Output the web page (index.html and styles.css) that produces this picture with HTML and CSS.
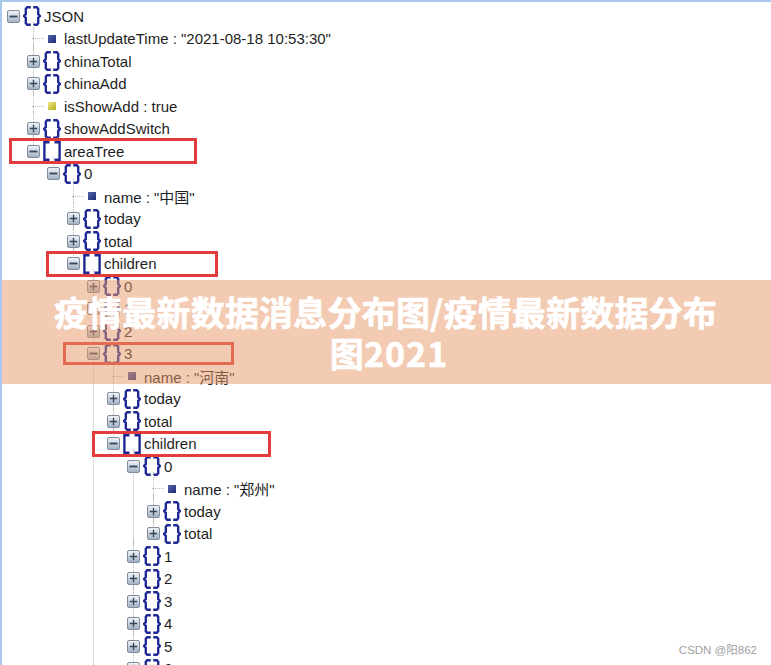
FILE: index.html
```html
<!DOCTYPE html>
<html lang="zh">
<head>
<meta charset="utf-8">
<title>JSON tree</title>
<link rel="stylesheet" href="styles.css">
</head>
<body>
<svg class="defs" width="0" height="0" aria-hidden="true">
  <symbol id="obj" viewBox="0 0 18 20">
    <path d="M7.8 1.3H4.2L2.8 2.8V8.2L0.9 10L2.8 11.8V17.2L4.2 18.7H7.8M10.2 1.3H13.8L15.2 2.8V8.2L17.1 10L15.2 11.8V17.2L13.8 18.7H10.2" fill="none" stroke="#1f2a94" stroke-width="2.4"/>
  </symbol>
  <symbol id="arr" viewBox="0 0 18 20">
    <path d="M6.5 1.3H1.4V18.7H6.5M11.5 1.3H16.6V18.7H11.5" fill="none" stroke="#1f2a94" stroke-width="2.4"/>
  </symbol>
  <symbol id="plus" viewBox="0 0 13 13">
    <path d="M2.8 6.5H10.2M6.5 2.8V10.2" stroke="#34445a" stroke-width="1.3"/>
  </symbol>
  <symbol id="minus" viewBox="0 0 13 13">
    <path d="M2.5 6.5H10.5" stroke="#34445a" stroke-width="1.8"/>
  </symbol>
</svg>
<main class="page">
<ul class="tree root">
  <li>
    <div class="row"><span class="tog"><svg><use href="#minus"/></svg></span><svg class="ic"><use href="#obj"/></svg><span class="lb">JSON</span></div>
    <ul class="tree">
      <li><div class="row"><span class="dash"></span><span class="leaf blue"></span><span class="lb">lastUpdateTime : "2021-08-18 10:53:30"</span></div></li>
      <li><div class="row"><span class="tog"><svg><use href="#plus"/></svg></span><svg class="ic"><use href="#obj"/></svg><span class="lb">chinaTotal</span></div></li>
      <li><div class="row"><span class="tog"><svg><use href="#plus"/></svg></span><svg class="ic"><use href="#obj"/></svg><span class="lb">chinaAdd</span></div></li>
      <li><div class="row"><span class="dash"></span><span class="leaf yellow"></span><span class="lb">isShowAdd : true</span></div></li>
      <li><div class="row"><span class="tog"><svg><use href="#plus"/></svg></span><svg class="ic"><use href="#obj"/></svg><span class="lb">showAddSwitch</span></div></li>
      <li>
        <div class="row"><span class="mark mark-area"></span><span class="tog"><svg><use href="#minus"/></svg></span><svg class="ic"><use href="#arr"/></svg><span class="lb">areaTree</span></div>
        <ul class="tree">
          <li>
            <div class="row"><span class="tog"><svg><use href="#minus"/></svg></span><svg class="ic"><use href="#obj"/></svg><span class="lb">0</span></div>
            <ul class="tree">
              <li><div class="row"><span class="dash"></span><span class="leaf blue"></span><span class="lb">name : "中国"</span></div></li>
              <li><div class="row"><span class="tog"><svg><use href="#plus"/></svg></span><svg class="ic"><use href="#obj"/></svg><span class="lb">today</span></div></li>
              <li><div class="row"><span class="tog"><svg><use href="#plus"/></svg></span><svg class="ic"><use href="#obj"/></svg><span class="lb">total</span></div></li>
              <li>
                <div class="row"><span class="mark mark-children"></span><span class="tog"><svg><use href="#minus"/></svg></span><svg class="ic"><use href="#arr"/></svg><span class="lb">children</span></div>
                <ul class="tree">
                  <li><div class="row"><span class="tog"><svg><use href="#plus"/></svg></span><svg class="ic"><use href="#obj"/></svg><span class="lb">0</span></div></li>
                  <li><div class="row"><span class="tog"><svg><use href="#plus"/></svg></span><svg class="ic"><use href="#obj"/></svg><span class="lb">1</span></div></li>
                  <li><div class="row"><span class="tog"><svg><use href="#plus"/></svg></span><svg class="ic"><use href="#obj"/></svg><span class="lb">2</span></div></li>
                  <li>
                    <div class="row"><span class="mark mark-three"></span><span class="tog"><svg><use href="#minus"/></svg></span><svg class="ic"><use href="#obj"/></svg><span class="lb">3</span></div>
                    <ul class="tree">
                      <li><div class="row"><span class="dash"></span><span class="leaf blue"></span><span class="lb">name : "河南"</span></div></li>
                      <li><div class="row"><span class="tog"><svg><use href="#plus"/></svg></span><svg class="ic"><use href="#obj"/></svg><span class="lb">today</span></div></li>
                      <li><div class="row"><span class="tog"><svg><use href="#plus"/></svg></span><svg class="ic"><use href="#obj"/></svg><span class="lb">total</span></div></li>
                      <li>
                        <div class="row"><span class="mark mark-sub"></span><span class="tog"><svg><use href="#minus"/></svg></span><svg class="ic"><use href="#arr"/></svg><span class="lb">children</span></div>
                        <ul class="tree">
                          <li>
                            <div class="row"><span class="tog"><svg><use href="#minus"/></svg></span><svg class="ic"><use href="#obj"/></svg><span class="lb">0</span></div>
                            <ul class="tree">
                              <li><div class="row"><span class="dash"></span><span class="leaf blue"></span><span class="lb">name : "郑州"</span></div></li>
                              <li><div class="row"><span class="tog"><svg><use href="#plus"/></svg></span><svg class="ic"><use href="#obj"/></svg><span class="lb">today</span></div></li>
                              <li><div class="row"><span class="tog"><svg><use href="#plus"/></svg></span><svg class="ic"><use href="#obj"/></svg><span class="lb">total</span></div></li>
                            </ul>
                          </li>
                          <li><div class="row"><span class="tog"><svg><use href="#plus"/></svg></span><svg class="ic"><use href="#obj"/></svg><span class="lb">1</span></div></li>
                          <li><div class="row"><span class="tog"><svg><use href="#plus"/></svg></span><svg class="ic"><use href="#obj"/></svg><span class="lb">2</span></div></li>
                          <li><div class="row"><span class="tog"><svg><use href="#plus"/></svg></span><svg class="ic"><use href="#obj"/></svg><span class="lb">3</span></div></li>
                          <li><div class="row"><span class="tog"><svg><use href="#plus"/></svg></span><svg class="ic"><use href="#obj"/></svg><span class="lb">4</span></div></li>
                          <li><div class="row"><span class="tog"><svg><use href="#plus"/></svg></span><svg class="ic"><use href="#obj"/></svg><span class="lb">5</span></div></li>
                          <li><div class="row"><span class="tog"><svg><use href="#plus"/></svg></span><svg class="ic"><use href="#obj"/></svg><span class="lb">6</span></div></li>
                          <li><div class="row"><span class="tog"><svg><use href="#plus"/></svg></span><svg class="ic"><use href="#obj"/></svg><span class="lb">7</span></div></li>
                        </ul>
                      </li>
                    </ul>
                  </li>
                  <li><div class="row"><span class="tog"><svg><use href="#plus"/></svg></span><svg class="ic"><use href="#obj"/></svg><span class="lb">4</span></div></li>
                </ul>
              </li>
            </ul>
          </li>
        </ul>
      </li>
    </ul>
  </li>
</ul>
<div class="banner"><h1>疫情最新数据消息分布图/疫情最新数据分布图<span class="year">2021</span></h1></div>
<div class="mark-csdn">CSDN @阳862</div>
</main>
</body>
</html>
```
FILE: styles.css
```css
* { box-sizing: border-box; }
html, body { margin: 0; padding: 0; }
body {
  width: 771px;
  height: 665px;
  overflow: hidden;
  background: #fff;
  font-family: "Liberation Sans", "Noto Sans CJK SC", sans-serif;
}
.defs { position: absolute; }
.page {
  position: relative;
  width: 771px;
  height: 665px;
  overflow: hidden;
  padding-top: 3px;
  border-top: 2px solid #a9c8ee;
  border-left: 2px solid #a9c8ee;
}
.tree { list-style: none; margin: 0 0 0 20px; padding: 0; }
.tree.root { margin-left: 0; }
.tree li { position: relative; }
.tree .tree > li::before {
  content: "";
  position: absolute;
  left: 11px;
  top: -6px;
  bottom: 0;
  border-left: 1px dotted #b9b9b9;
}
.tree .tree > li:last-child::before { bottom: auto; height: 17px; }
.row {
  position: relative;
  display: flex;
  align-items: center;
  height: 22.5px;
  padding-left: 5px;
  font-size: 15px;
  color: #1e1e1e;
  white-space: nowrap;
}
.tog {
  position: relative;
  z-index: 1;
  flex: none;
  width: 13px;
  height: 13px;
  margin-right: -1px;
  border: 1px solid #7f8d9c;
  border-radius: 2px;
  background: linear-gradient(#f0f3f7, #a3b2c3);
}
.tog svg { display: block; width: 13px; height: 13px; margin: -1px 0 0 -1px; }
.ic { flex: none; width: 18px; height: 20px; margin-left: 4px; }
.lb { margin-left: 3px; }
.dash {
  flex: none;
  width: 12px;
  height: 0;
  margin-left: 5px;
  border-top: 1px dotted #b9b9b9;
  margin-right: -5px;
}
.leaf {
  flex: none;
  width: 8px;
  height: 8px;
  margin-left: 9px;
  margin-right: 5px;
}
.blue { background: linear-gradient(135deg, #5566aa, #1d2a78); }
.yellow { background: linear-gradient(135deg, #efe98a, #b8ae1c); }
.mark { position: absolute; top: -2px; height: 26px; border: 3px solid #e23c3c; z-index: 2; }
.mark-area { left: -13px; width: 188px; }
.mark-children { left: -16px; width: 172px; }
.mark-three { left: -19px; top: -1px; height: 23px; width: 171px; }
.mark-sub { left: -10px; width: 179px; }
.banner {
  position: absolute;
  left: -2px;
  top: 278px;
  width: 771px;
  height: 104px;
  z-index: 3;
  padding: 11px 40px;
  background: rgba(232, 152, 104, 0.5);
}
.banner h1 {
  margin: 0;
  font-family: "Noto Sans CJK SC", sans-serif;
  font-size: 34px;
  font-weight: 700;
  line-height: 41px;
  letter-spacing: 0.2px;
  color: #fff;
  -webkit-text-stroke: 0.6px #fff;
  text-align: center;
}
.year { letter-spacing: 1px; margin-right: -7px; }
.mark-csdn {
  position: absolute;
  right: 14px;
  bottom: 8px;
  z-index: 4;
  font-size: 11.5px;
  color: #a0a0a0;
}
```
